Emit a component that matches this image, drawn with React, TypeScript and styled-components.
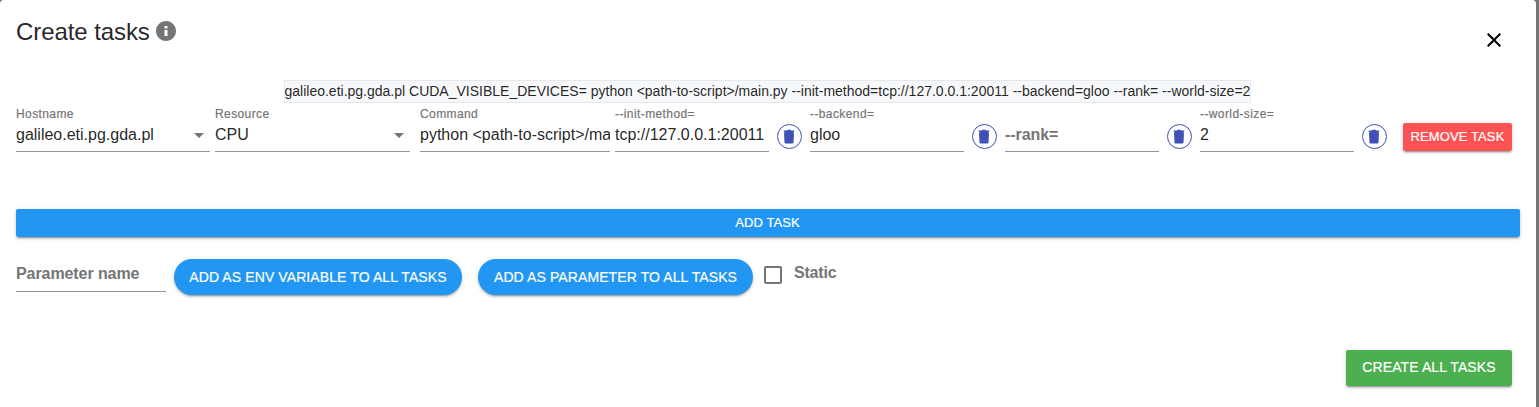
import React from "react";
import styled, { createGlobalStyle } from "styled-components";

const GlobalStyle = createGlobalStyle`
  *, *::before, *::after { box-sizing: border-box; }
  body {
    margin: 0;
    background: #757575;
    overflow: hidden;
    font-family: "Liberation Sans", Arial, sans-serif;
    color: rgba(0, 0, 0, 0.87);
  }
  button { font-family: inherit; border: 0; margin: 0; cursor: pointer; }
`;

const raised =
  "0 3px 1px -2px rgba(0,0,0,.2), 0 2px 2px 0 rgba(0,0,0,.14), 0 1px 5px 0 rgba(0,0,0,.12)";

const Dialog = styled.main`
  display: flex;
  flex-direction: column;
  width: 1536px;
  height: 407px;
  padding: 0 16px;
  background: #fff;
  border-radius: 4px 4px 0 0;
`;

const Header = styled.header`
  display: flex;
  align-items: flex-start;
  height: 80px;
`;

const Title = styled.h2`
  margin: 18px 4px 0 0;
  font-size: 24px;
  letter-spacing: -0.08px;
  line-height: 28px;
  font-weight: 400;
`;

const InfoIcon = styled.svg`
  margin-top: 19px;
  width: 24px;
  height: 24px;
  fill: #757575;
`;

const CloseButton = styled.button`
  display: flex;
  margin: 28px 14.5px 0 auto;
  padding: 0;
  background: none;
`;

const Preview = styled.div`
  align-self: center;
  width: 967px;
  height: 23px;
  margin-right: 2px;
  border: 1px solid #e4e8ed;
  background: #f7f8fa;
  font-size: 14px;
  line-height: 21px;
  white-space: nowrap;
`;

const TaskRow = styled.div`
  display: flex;
  height: 106px;
`;

const FieldBox = styled.div<{ $width: number; $gap: number }>`
  display: flex;
  flex-direction: column;
  flex: none;
  width: ${(p) => p.$width}px;
  height: 49px;
  margin-right: ${(p) => p.$gap}px;
  border-bottom: 1px solid #949494;
`;

const Label = styled.label`
  height: 22px;
  padding-top: 4px;
  font-size: 12px;
  line-height: 14px;
  letter-spacing: 0.4px;
  color: #757575;
  -webkit-text-stroke: 0.2px #757575;
  white-space: nowrap;
`;

const Value = styled.div<{ $placeholder?: boolean }>`
  display: flex;
  align-items: center;
  height: 20px;
  overflow: hidden;
  font-size: 16px;
  line-height: 20px;
  white-space: nowrap;
  letter-spacing: ${(p) => (p.$placeholder ? "-0.08px" : "0")};
  font-weight: ${(p) => (p.$placeholder ? 700 : 400)};
  color: ${(p) => (p.$placeholder ? "#757575" : "rgba(0,0,0,.87)")};
`;

const Caret = styled.span`
  margin: 0 6.5px 0 auto;
  border: 5px solid transparent;
  border-top-color: #757575;
  border-bottom: 0;
`;

const TrashButton = styled.button`
  display: flex;
  flex: none;
  align-items: center;
  justify-content: center;
  width: 25px;
  height: 25px;
  margin: 21px 8px 0 0;
  padding: 0 1px 0 0;
  border: 1px solid #3f51b5;
  border-radius: 50%;
  background: #fff;
`;

const Button = styled.button<{ $color: string }>`
  flex: none;
  padding: 0;
  color: #fff;
  background: ${(p) => p.$color};
  border-radius: 2px;
  box-shadow: ${raised};
  font-size: 14px;
  letter-spacing: 0.1px;
  -webkit-text-stroke: 0.2px #fff;
  text-align: center;
  white-space: nowrap;
`;

const RemoveButton = styled(Button)`
  width: 109px;
  height: 28px;
  margin: 20px 0 0 8px;
  padding-bottom: 1px;
  font-size: 13px;
`;

const AddTaskButton = styled(Button)`
  height: 28px;
  padding: 0 1px 1px 0;
  font-size: 13px;
`;

const PillButton = styled(Button)<{ $width: number; $gap: number }>`
  width: ${(p) => p.$width}px;
  height: 36px;
  margin-right: ${(p) => p.$gap}px;
  border-radius: 18px;
`;

const ParameterRow = styled.div`
  display: flex;
  height: 91px;
  padding-top: 22px;
`;

const ParameterField = styled.div`
  width: 150px;
  height: 33px;
  margin-right: 8px;
  padding-top: 5px;
  border-bottom: 1px solid #949494;
`;

const Checkbox = styled.span`
  width: 18px;
  height: 18px;
  margin: 7px 12px 0 0;
  border: 2px solid #757575;
  border-radius: 2px;
`;

const StaticLabel = styled.label`
  display: flex;
  font-size: 16px;
  line-height: 27px;
  font-weight: 700;
  letter-spacing: -0.2px;
  color: #757575;
`;

const Footer = styled.footer`
  display: flex;
  justify-content: flex-end;
  padding: 22px 8px 0 0;
`;

const CreateButton = styled(Button)`
  width: 166px;
  height: 36px;
  padding-bottom: 2px;
`;

type FieldProps = {
  label?: string;
  value?: string;
  placeholder?: string;
  width: number;
  gap: number;
  select?: boolean;
};

const Field = ({ label, value, placeholder, width, gap, select }: FieldProps) => (
  <FieldBox $width={width} $gap={gap}>
    <Label>{label}</Label>
    <Value $placeholder={!value}>
      {value || placeholder}
      {select && <Caret />}
    </Value>
  </FieldBox>
);

const Trash = () => (
  <TrashButton aria-label="Remove parameter">
    <svg width="12" height="15" viewBox="0 0 12 15" fill="#3f51b5">
      <path d="M1 4h10l-.5 9.500q-.1 1-1 1h-7q-.9 0-1-1zM.8 1.500h2.900l.7-.8h3.200l.7.8h2.900v1.500H.8z" />
      <path d="M1.500 2.800h9v1.500h-9z" />
    </svg>
  </TrashButton>
);

const parameters = [
  { label: "--init-method=", value: "tcp://127.0.0.1:20011" },
  { label: "--backend=", value: "gloo" },
  { placeholder: "--rank=" },
  { label: "--world-size=", value: "2" },
];

export default function App() {
  return (
    <>
      <GlobalStyle />
      <Dialog>
        <Header>
          <Title>Create tasks</Title>
          <InfoIcon viewBox="0 0 24 24">
            <path d="M12 2C6.480 2 2 6.480 2 12s4.480 10 10 10 10-4.480 10-10S17.520 2 12 2zm1.500 15h-3v-6h3v6zm0-7.500h-3V7h3v2.500z" />
          </InfoIcon>
          <CloseButton aria-label="Close">
            <svg width="24" height="24" viewBox="0 0 24 24">
              <path d="M19 6.410L17.590 5 12 10.590 6.410 5 5 6.410 10.590 12 5 17.590 6.410 19 12 13.410 17.590 19 19 17.590 13.410 12z" />
            </svg>
          </CloseButton>
        </Header>
        <Preview>
          galileo.eti.pg.gda.pl CUDA_VISIBLE_DEVICES= python &lt;path-to-script&gt;/main.py
          --init-method=tcp://127.0.0.1:20011 --backend=gloo --rank= --world-size=2
        </Preview>
        <TaskRow>
          <Field label="Hostname" value="galileo.eti.pg.gda.pl" width={194} gap={5} select />
          <Field label="Resource" value="CPU" width={195} gap={10} select />
          <Field label="Command" value="python <path-to-script>/ma" width={190} gap={5} />
          {parameters.map((p, i) => (
            <React.Fragment key={i}>
              <Field {...p} width={154} gap={8} />
              <Trash />
            </React.Fragment>
          ))}
          <RemoveButton $color="#ff5252">REMOVE TASK</RemoveButton>
        </TaskRow>
        <AddTaskButton $color="#2196f3">ADD TASK</AddTaskButton>
        <ParameterRow>
          <ParameterField>
            <Value $placeholder>Parameter name</Value>
          </ParameterField>
          <PillButton $color="#2196f3" $width={288} $gap={16}>
            ADD AS ENV VARIABLE TO ALL TASKS
          </PillButton>
          <PillButton $color="#2196f3" $width={275} $gap={11}>
            ADD AS PARAMETER TO ALL TASKS
          </PillButton>
          <StaticLabel>
            <Checkbox />
            Static
          </StaticLabel>
        </ParameterRow>
        <Footer>
          <CreateButton $color="#4caf50">CREATE ALL TASKS</CreateButton>
        </Footer>
      </Dialog>
    </>
  );
}
